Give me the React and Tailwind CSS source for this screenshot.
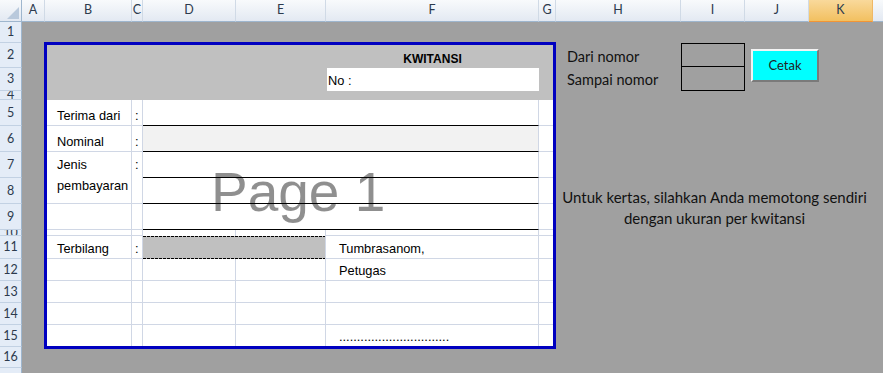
import React from 'react';

const headerCols = [
  { l: 'A', w: 'w-[23px]' },
  { l: 'B', w: 'w-[87px]' },
  { l: 'C', w: 'w-[11px]' },
  { l: 'D', w: 'w-[93px]' },
  { l: 'E', w: 'w-[90px]' },
  { l: 'F', w: 'w-[213px]' },
  { l: 'G', w: 'w-[17px]' },
  { l: 'H', w: 'w-[125px]' },
  { l: 'I', w: 'w-[64px]' },
  { l: 'J', w: 'w-[64px]' },
  { l: 'K', w: 'w-[64px]', sel: true },
];

const rowHeads = [
  ['1', 'h-[21px]'],
  ['2', 'h-[25px]'],
  ['3', 'h-[23px]'],
  ['4', 'h-[9px]'],
  ['5', 'h-[26px]'],
  ['6', 'h-[26px]'],
  ['7', 'h-[26px]'],
  ['8', 'h-[26px]'],
  ['9', 'h-[26px]'],
  ['10', 'h-[6px]'],
  ['11', 'h-[23px]'],
  ['12', 'h-[22px]'],
  ['13', 'h-[22px]'],
  ['14', 'h-[22px]'],
  ['15', 'h-[22px]'],
  ['16', 'h-[21px]'],
  ['', 'h-[21px]'],
];

function Cell({ className = '', children }) {
  return (
    <div className={`border-r border-b border-[#d0d7e5] overflow-visible whitespace-nowrap ${className}`}>
      {children}
    </div>
  );
}

const label = 'flex items-end pl-[12px] pb-[2px] leading-[14px]';
const colon = 'flex items-end pl-[3px] pb-[2px] leading-[14px]';
const fText = 'flex items-end pl-[13px] pb-[2px] leading-[14px]';

export default function App() {
  return (
    <div className="w-[883px] h-[373px] overflow-hidden bg-[#a0a0a0] flex flex-col font-['Liberation_Sans',Arial,sans-serif] text-[12.8px] text-black">
      {/* column header */}
      <div className="flex h-[22px] shrink-0 font-['Lato',sans-serif] text-[12.5px] text-[#2c3a4d]">
        <div className="w-[22px] shrink-0 h-full border-r border-b border-[#9eb6ce] bg-[linear-gradient(#f8fafc,#e3e9f2)]">
          <svg width="21" height="21" viewBox="0 0 21 21">
            <polygon points="19,7 19,19 7,19" fill="#b9c9dc" />
          </svg>
        </div>
        {headerCols.map((c) => (
          <div
            key={c.l}
            className={`${c.w} shrink-0 h-full flex items-center justify-center border-r border-b ${
              c.sel
                ? 'bg-[linear-gradient(#f9d99b,#f2c060)] border-[#f0b865] border-b-[#f29536]'
                : 'bg-[linear-gradient(#f8fafc,#e3e9f2)] border-[#d0dae6] border-b-[#9eb6ce]'
            }`}
          >
            {c.l}
          </div>
        ))}
        <div className="flex-1 h-full border-b border-[#9eb6ce] bg-[linear-gradient(#f8fafc,#e3e9f2)]" />
      </div>

      <div className="flex flex-1 min-h-0">
        {/* row header */}
        <div className="w-[22px] shrink-0 flex flex-col font-['Lato',sans-serif] text-[12.5px] text-[#2c3a4d]">
          {rowHeads.map(([n, h], i) => (
            <div
              key={i}
              className={`${h} shrink-0 overflow-hidden flex items-center justify-center bg-[#e4ecf7] border-b border-r border-[#c2d1e3] border-r-[#9eb6ce] leading-[14px]`}
            >
              {n}
            </div>
          ))}
        </div>

        {/* sheet */}
        <div className="flex-1 grid grid-cols-[23px_87px_11px_93px_90px_213px_17px_125px_64px_64px_64px_1fr] grid-rows-[21px_25px_23px_9px_26px_26px_26px_26px_26px_6px_23px_22px_22px_22px_22px_21px_1fr]">
          {/* print area */}
          <div className="col-start-2 col-span-6 row-start-2 row-span-14 relative bg-white grid grid-cols-[87px_11px_93px_90px_213px_17px] grid-rows-[25px_23px_9px_26px_26px_26px_26px_26px_6px_23px_22px_22px_22px_22px]">
            {/* header band */}
            <div className="col-start-1 col-span-6 row-start-1 row-span-3 bg-[#c0c0c0]" />
            <div className="col-start-5 row-start-1 flex items-end justify-center pb-[2px] font-bold text-[12px] leading-[14px]">
              KWITANSI
            </div>
            <div className="col-start-5 row-start-2 ml-px bg-white flex items-end pl-px pb-[3px] leading-[14px]">
              No :
            </div>

            {/* row 5 */}
            <Cell className={`col-start-1 row-start-4 ${label}`}>Terima dari</Cell>
            <Cell className={`col-start-2 row-start-4 ${colon}`}>:</Cell>
            <Cell className="col-start-3 col-span-3 row-start-4 border-b-black" />
            <Cell className="col-start-6 row-start-4" />

            {/* row 6 */}
            <Cell className={`col-start-1 row-start-5 ${label}`}>Nominal</Cell>
            <Cell className={`col-start-2 row-start-5 ${colon}`}>:</Cell>
            <Cell className="col-start-3 col-span-3 row-start-5 border-b-black bg-[#f2f2f2]" />
            <Cell className="col-start-6 row-start-5" />

            {/* rows 7-8 */}
            <Cell className="col-start-1 row-start-6 row-span-2 pl-[12px] pt-[2px] leading-[21px] whitespace-normal">
              Jenis
              <br />
              pembayaran
            </Cell>
            <Cell className="col-start-2 row-start-6 row-span-2 pl-[3px] pt-[2px] leading-[21px]">:</Cell>
            <Cell className="col-start-3 col-span-3 row-start-6 border-b-black" />
            <Cell className="col-start-6 row-start-6" />
            <Cell className="col-start-3 col-span-3 row-start-7 border-b-black" />
            <Cell className="col-start-6 row-start-7" />

            {/* row 9 */}
            <Cell className="col-start-1 row-start-8" />
            <Cell className="col-start-2 row-start-8" />
            <Cell className="col-start-3 col-span-3 row-start-8 border-b-black" />
            <Cell className="col-start-6 row-start-8" />

            {/* row 10 */}
            <Cell className="col-start-1 row-start-9" />
            <Cell className="col-start-2 row-start-9" />
            <Cell className="col-start-3 row-start-9 border-b-0" />
            <Cell className="col-start-4 row-start-9 border-b-0" />
            <Cell className="col-start-5 row-start-9" />
            <Cell className="col-start-6 row-start-9" />

            {/* row 11 */}
            <Cell className={`col-start-1 row-start-10 ${label}`}>Terbilang</Cell>
            <Cell className={`col-start-2 row-start-10 ${colon}`}>:</Cell>
            <div className="col-start-3 col-span-2 row-start-10 bg-[#c0c0c0] border-r border-[#d0d7e5] flex flex-col justify-between">
              <div className="h-px bg-[repeating-linear-gradient(90deg,#000_0_3px,transparent_3px_4px)]" />
              <div className="h-px bg-[repeating-linear-gradient(90deg,#000_0_3px,transparent_3px_4px)]" />
            </div>
            <Cell className={`col-start-5 row-start-10 ${fText}`}>Tumbrasanom,</Cell>
            <Cell className="col-start-6 row-start-10" />

            {/* row 12 */}
            <Cell className="col-start-1 row-start-11" />
            <Cell className="col-start-2 row-start-11" />
            <Cell className="col-start-3 row-start-11" />
            <Cell className="col-start-4 row-start-11" />
            <Cell className={`col-start-5 row-start-11 ${fText}`}>Petugas</Cell>
            <Cell className="col-start-6 row-start-11" />

            {/* row 13 */}
            <Cell className="col-start-1 row-start-12" />
            <Cell className="col-start-2 row-start-12" />
            <Cell className="col-start-3 row-start-12" />
            <Cell className="col-start-4 row-start-12" />
            <Cell className="col-start-5 row-start-12" />
            <Cell className="col-start-6 row-start-12" />

            {/* row 14 */}
            <Cell className="col-start-1 row-start-13" />
            <Cell className="col-start-2 row-start-13" />
            <Cell className="col-start-3 row-start-13" />
            <Cell className="col-start-4 row-start-13" />
            <Cell className="col-start-5 row-start-13" />
            <Cell className="col-start-6 row-start-13" />

            {/* row 15 */}
            <Cell className="col-start-1 row-start-14" />
            <Cell className="col-start-2 row-start-14" />
            <Cell className="col-start-3 row-start-14" />
            <Cell className="col-start-4 row-start-14" />
            <Cell className={`col-start-5 row-start-14 ${fText}`}>...............................</Cell>
            <Cell className="col-start-6 row-start-14" />

            {/* watermark */}
            <div className="absolute left-[166px] top-[122px] text-[55px] leading-[55px] text-[rgba(0,0,0,0.44)] pointer-events-none whitespace-nowrap">
              Page 1
            </div>
            {/* print area border */}
            <div className="absolute -left-px -top-px right-0 -bottom-[2px] border-[3px] border-[#0000c0] pointer-events-none" />
          </div>

          {/* right side controls */}
          <div className="col-start-8 row-start-2 flex items-end pl-[11px] pb-[3px] font-['Lato',sans-serif] text-[14.5px] leading-[16px] text-[#111] whitespace-nowrap">
            Dari nomor
          </div>
          <div className="col-start-8 row-start-3 flex items-end pl-[11px] pb-[3px] font-['Lato',sans-serif] text-[14.5px] leading-[16px] text-[#111] whitespace-nowrap">
            Sampai nomor
          </div>
          <div className="col-start-9 row-start-2 row-span-2 border border-black flex flex-col">
            <div className="h-[23px] border-b border-black" />
            <div className="flex-1" />
          </div>
          <div className="col-start-10 row-start-2 row-span-2 self-start justify-self-start mt-[6px] ml-[6px] w-[68px] h-[33px] bg-[#00ffff] border-2 border-t-[#f4f4f4] border-l-[#f4f4f4] border-r-[#7a7a7a] border-b-[#7a7a7a] flex items-center justify-center font-['Lato',sans-serif] text-[13px] text-[#222] z-10">
            Cetak
          </div>
          <div className="col-start-8 col-span-4 row-start-8 row-span-2 flex flex-col items-center pt-[9px] font-['Lato',sans-serif] text-[15px] leading-[21px] text-[#111] whitespace-nowrap">
            <span>Untuk kertas, silahkan Anda memotong sendiri</span>
            <span>dengan ukuran per kwitansi</span>
          </div>
        </div>
      </div>
    </div>
  );
}
